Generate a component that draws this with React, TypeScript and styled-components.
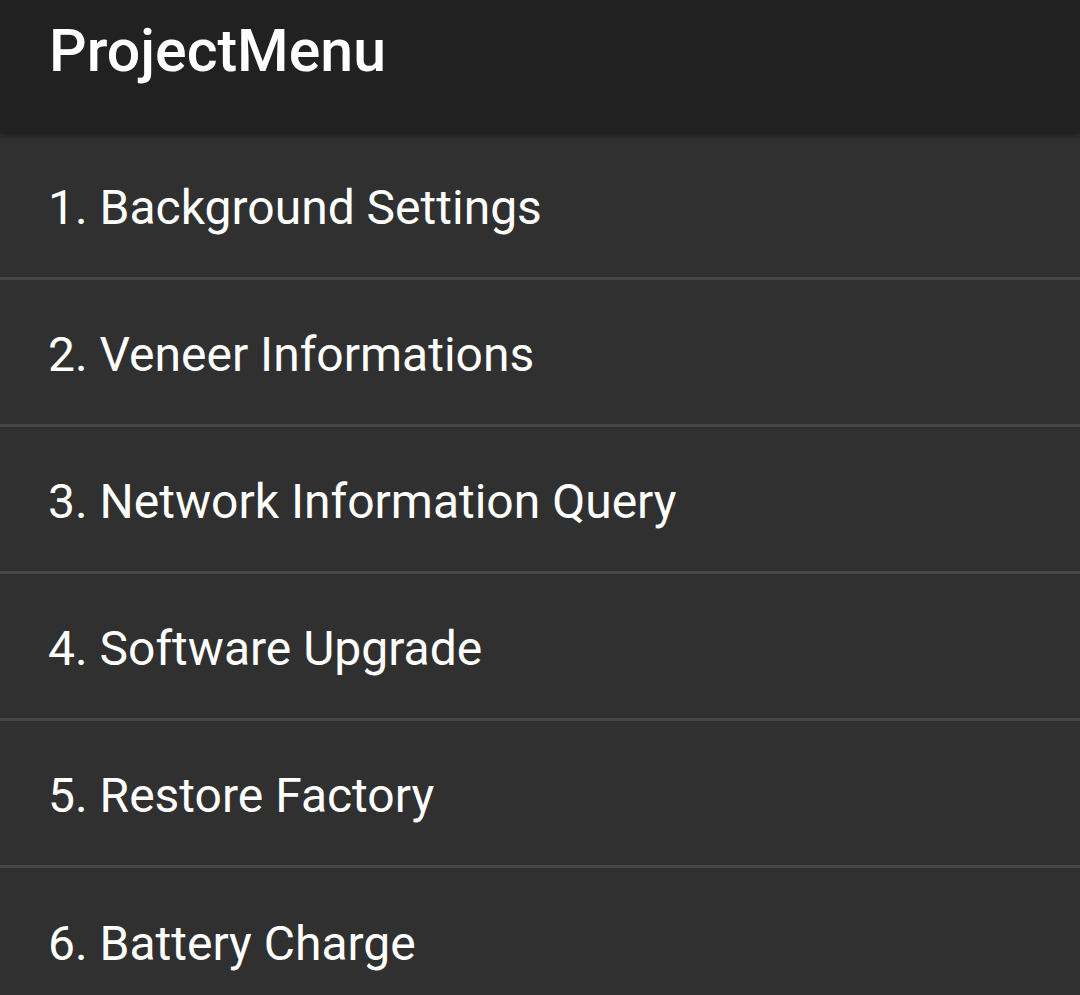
import React from 'react'
import styled, { createGlobalStyle } from 'styled-components'

const GlobalStyle = createGlobalStyle`
  html, body {
    margin: 0;
    padding: 0;
    background: #303030;
  }

  body {
    font-family: Roboto, 'Noto Sans', sans-serif;
    -webkit-font-smoothing: antialiased;
  }
`

const Page = styled.div`
  min-height: 100vh;
  background: #303030;
`

const Header = styled.header`
  position: relative;
  z-index: 1;
  height: 133px;
  background: #212121;
  display: flex;
  align-items: flex-start;
  padding: 0 49px;
  box-sizing: border-box;
  box-shadow: 0 2px 6px rgba(0, 0, 0, 0.45);
`

const Title = styled.h1`
  margin: 16px 0 0;
  font-size: 59px;
  font-weight: 500;
  color: #ffffff;
  letter-spacing: 0;
`

const List = styled.ul`
  list-style: none;
  margin: 0;
  padding: 0;
`

const Item = styled.li`
  height: 147px;
  display: flex;
  align-items: center;
  padding: 4px 48px 0;
  box-sizing: border-box;
  border-bottom: 3px solid #464646;
  color: #ffffff;
  font-size: 48px;
  font-weight: 400;
  cursor: pointer;

  &:last-child {
    border-bottom: none;
  }
`

const items = [
  'Background Settings',
  'Veneer Informations',
  'Network Information Query',
  'Software Upgrade',
  'Restore Factory',
  'Battery Charge',
]

export default function App() {
  return (
    <>
      <GlobalStyle />
      <Page>
        <Header>
          <Title>ProjectMenu</Title>
        </Header>
        <List>
          {items.map((label, i) => (
            <Item key={label}>
              {i + 1}. {label}
            </Item>
          ))}
        </List>
      </Page>
    </>
  )
}
